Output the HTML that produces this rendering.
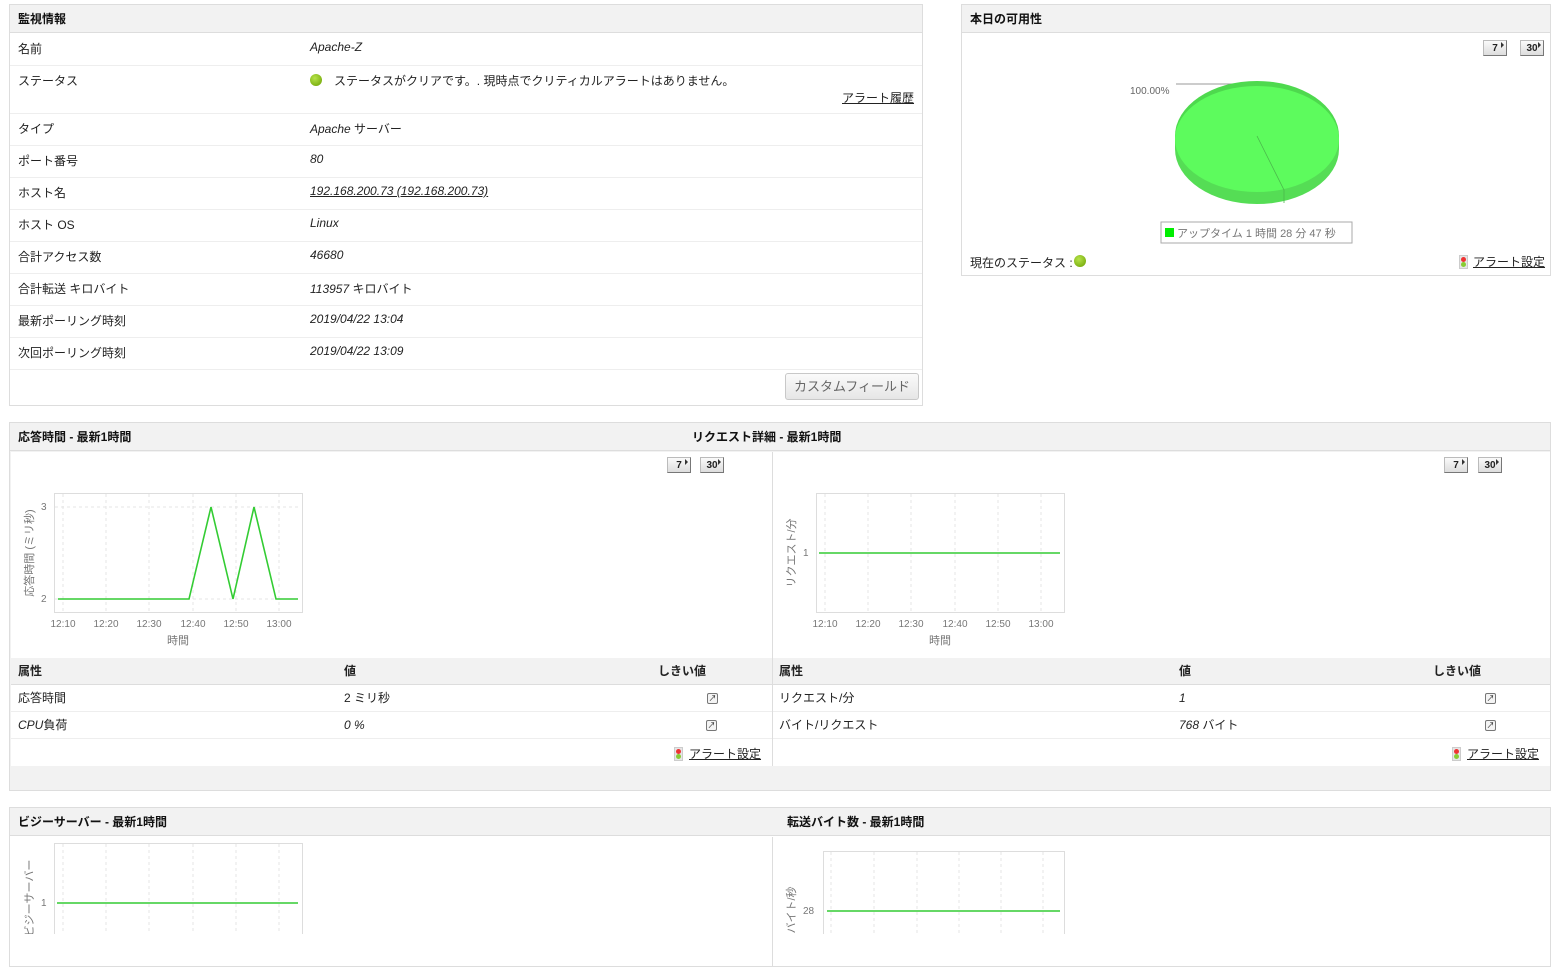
<!DOCTYPE html>
<html><head><meta charset="utf-8"><style>
*{box-sizing:border-box;margin:0;padding:0}
body{width:1557px;height:934px;overflow:hidden;background:#fff;font-family:"Liberation Sans","Noto Sans CJK JP",sans-serif;font-size:12px;color:#222;position:relative}
.a{position:absolute}
.panel{position:absolute;border:1px solid #ddd;background:#fff}
.hd{position:absolute;left:0;right:0;top:0;height:28px;background:#f2f2f2;border-bottom:1px solid #ddd;font-weight:bold;font-size:12px;line-height:28px;padding-left:8px;color:#111}
.row{position:absolute;left:0;right:0;border-bottom:1px solid #eee;font-size:12px}
.row span{position:absolute;top:6px}
.i{font-style:italic}
u{color:#222}
.btn{position:absolute;width:24px;height:16px;background:linear-gradient(#fafafa,#ddd);border:1px solid #bbb;border-bottom-color:#777;border-right-color:#777;font-size:10px;font-weight:bold;text-align:center;line-height:15px}
.btn:after{content:"";position:absolute;right:2px;top:1px;border-left:3px solid #333;border-top:3px solid transparent;border-bottom:3px solid transparent}
.ext{position:absolute;width:11px;height:11px;border:1px solid #777;border-radius:2px;background:#f4f4f4;font-size:8px;line-height:9px;text-align:center}
.tl{position:absolute;width:9px;height:14px;background:#e6e6e6;border:1px solid #ccc}
.tl:before{content:"";position:absolute;left:1px;top:1px;width:5px;height:5px;border-radius:50%;background:#e33}
.tl:after{content:"";position:absolute;left:1px;top:6px;width:5px;height:5px;border-radius:50%;background:#8c3}
.dot{position:absolute;width:12px;height:12px;border-radius:50%;background:radial-gradient(circle at 40% 35%,#b6e34a,#6aa000)}
</style></head><body>

<!-- Panel 1 -->
<div class="panel" style="left:9px;top:4px;width:914px;height:402px">
 <div class="hd">監視情報</div>
 <div class="row" style="top:29px;height:32px"><span style="left:8px">名前</span><span class="i" style="left:300px">Apache-Z</span></div>
 <div class="row" style="top:61px;height:48px"><span style="left:8px">ステータス</span><div class="dot" style="left:300px;top:8px"></div><span style="left:324px">ステータスがクリアです。. 現時点でクリティカルアラートはありません。</span><span style="left:832px;top:23px"><u>アラート履歴</u></span></div>
 <div class="row" style="top:109px;height:32px"><span style="left:8px">タイプ</span><span style="left:300px"><i>Apache</i> サーバー</span></div>
 <div class="row" style="top:141px;height:32px"><span style="left:8px">ポート番号</span><span class="i" style="left:300px">80</span></div>
 <div class="row" style="top:173px;height:32px"><span style="left:8px">ホスト名</span><span class="i" style="left:300px"><u>192.168.200.73 (192.168.200.73)</u></span></div>
 <div class="row" style="top:205px;height:32px"><span style="left:8px">ホスト OS</span><span class="i" style="left:300px">Linux</span></div>
 <div class="row" style="top:237px;height:32px"><span style="left:8px">合計アクセス数</span><span class="i" style="left:300px">46680</span></div>
 <div class="row" style="top:269px;height:32px"><span style="left:8px">合計転送 キロバイト</span><span style="left:300px"><i>113957</i> キロバイト</span></div>
 <div class="row" style="top:301px;height:32px"><span style="left:8px">最新ポーリング時刻</span><span class="i" style="left:300px">2019/04/22 13:04</span></div>
 <div class="row" style="top:333px;height:32px"><span style="left:8px">次回ポーリング時刻</span><span class="i" style="left:300px">2019/04/22 13:09</span></div>
 <div class="a" style="left:775px;top:368px;width:134px;height:27px;border:1px solid #c8c8c8;border-radius:3px;background:linear-gradient(#fafafa,#e6e6e6);color:#666;font-size:13px;text-align:center;line-height:25px">カスタムフィールド</div>
</div>

<!-- Panel 2 -->
<div class="panel" style="left:961px;top:4px;width:590px;height:272px">
 <div class="hd">本日の可用性</div>
 <div class="btn" style="left:521px;top:35px">7</div>
 <div class="btn" style="left:558px;top:35px">30</div>
 <svg class="a" style="left:0;top:0" width="590" height="272">
  <line x1="214" y1="79" x2="270" y2="79" stroke="#999" stroke-width="1"/>
  <text x="168" y="89" font-size="10" fill="#666" font-family="Liberation Sans">100.00%</text>
  <ellipse cx="295" cy="144" rx="82" ry="55" fill="#55dd55"/>
  <rect x="213" y="131" width="164" height="13" fill="#55dd55"/>
  <ellipse cx="295" cy="131" rx="82" ry="55" fill="#4ed94e"/>
  <ellipse cx="295" cy="134" rx="82" ry="53" fill="#5dfb5d"/>
  <polyline points="295,131 322,185 322,198" fill="none" stroke="#4bb84b" stroke-width="0.8"/>
  <rect x="199" y="217" width="191" height="21" fill="#fff" stroke="#aaa"/>
  <rect x="203" y="223" width="9" height="9" fill="#00ee00"/>
  <text x="215" y="232" font-size="11" fill="#777" font-family="Liberation Sans,Noto Sans CJK JP">アップタイム 1 時間 28 分 47 秒</text>
 </svg>
 <span class="a" style="left:8px;top:249px">現在のステータス :</span>
 <div class="dot" style="left:112px;top:250px"></div>
 <div class="tl" style="left:497px;top:250px"></div>
 <span class="a" style="left:511px;top:248px"><u>アラート設定</u></span>
</div>

<!-- Panel 3 -->
<div class="panel" style="left:9px;top:422px;width:1542px;height:369px;background:#f2f2f2">
 <div class="hd">応答時間 - 最新1時間<span class="a" style="left:682px">リクエスト詳細 - 最新1時間</span></div>
 <div class="a" style="left:1px;top:29px;width:761px;height:314px;background:#fff"></div>
 <div class="a" style="left:763px;top:29px;width:777px;height:314px;background:#fff"></div>
 <div class="a" style="left:762px;top:29px;width:1px;height:314px;background:#ddd"></div>
 <div class="btn" style="left:657px;top:34px">7</div>
 <div class="btn" style="left:690px;top:34px">30</div>
 <div class="btn" style="left:1434px;top:34px">7</div>
 <div class="btn" style="left:1468px;top:34px">30</div>
 <div class="a" style="left:1px;top:235px;width:761px;height:27px;background:#f2f2f2;border-bottom:1px solid #ddd;font-weight:bold;line-height:27px"><span class="a" style="left:7px">属性</span><span class="a" style="left:333px">値</span><span class="a" style="left:647px">しきい値</span></div>
 <div class="a" style="left:1px;top:262px;width:761px;height:27px;border-bottom:1px solid #eee;line-height:27px"><span class="a" style="left:7px">応答時間</span><span class="a" style="left:333px">2 ミリ秒</span><div class="ext" style="left:696px;top:8px">↗</div></div>
 <div class="a" style="left:1px;top:289px;width:761px;height:27px;border-bottom:1px solid #eee;line-height:27px"><span class="a" style="left:7px"><i>CPU</i>負荷</span><span class="a i" style="left:333px">0 %</span><div class="ext" style="left:695px;top:8px">↗</div></div>
 <div class="tl" style="left:664px;top:324px"></div><span class="a" style="left:679px;top:322px"><u>アラート設定</u></span>
 <div class="a" style="left:763px;top:235px;width:777px;height:27px;background:#f2f2f2;border-bottom:1px solid #ddd;font-weight:bold;line-height:27px"><span class="a" style="left:6px">属性</span><span class="a" style="left:406px">値</span><span class="a" style="left:660px">しきい値</span></div>
 <div class="a" style="left:763px;top:262px;width:777px;height:27px;border-bottom:1px solid #eee;line-height:27px"><span class="a" style="left:6px">リクエスト/分</span><span class="a i" style="left:406px">1</span><div class="ext" style="left:712px;top:8px">↗</div></div>
 <div class="a" style="left:763px;top:289px;width:777px;height:27px;border-bottom:1px solid #eee;line-height:27px"><span class="a" style="left:6px">バイト/リクエスト</span><span class="a" style="left:406px"><i>768</i> バイト</span><div class="ext" style="left:712px;top:8px">↗</div></div>
 <div class="tl" style="left:1442px;top:324px"></div><span class="a" style="left:1457px;top:322px"><u>アラート設定</u></span>
</div>

<!-- Panel 4 -->
<div class="panel" style="left:9px;top:807px;width:1542px;height:160px">
 <div class="hd">ビジーサーバー - 最新1時間<span class="a" style="left:777px">転送バイト数 - 最新1時間</span></div>
 <div class="a" style="left:762px;top:29px;width:1px;height:130px;background:#ddd"></div>
</div>

<svg class="a" style="left:0;top:0" width="1557" height="934" font-family="Liberation Sans,Noto Sans CJK JP" font-size="10" fill="#777">
 <g stroke="#e4e4e4" stroke-dasharray="3,3">
  <line x1="63" y1="494" x2="63" y2="611"/><line x1="106" y1="494" x2="106" y2="611"/><line x1="149" y1="494" x2="149" y2="611"/><line x1="193" y1="494" x2="193" y2="611"/><line x1="236" y1="494" x2="236" y2="611"/><line x1="279" y1="494" x2="279" y2="611"/>
  <line x1="55" y1="507" x2="301" y2="507"/><line x1="55" y1="599" x2="301" y2="599"/>
  <line x1="825" y1="494" x2="825" y2="611"/><line x1="868" y1="494" x2="868" y2="611"/><line x1="911" y1="494" x2="911" y2="611"/><line x1="955" y1="494" x2="955" y2="611"/><line x1="998" y1="494" x2="998" y2="611"/><line x1="1041" y1="494" x2="1041" y2="611"/>
  <line x1="63" y1="844" x2="63" y2="934"/><line x1="106" y1="844" x2="106" y2="934"/><line x1="149" y1="844" x2="149" y2="934"/><line x1="193" y1="844" x2="193" y2="934"/><line x1="236" y1="844" x2="236" y2="934"/><line x1="279" y1="844" x2="279" y2="934"/>
  <line x1="831" y1="852" x2="831" y2="934"/><line x1="874" y1="852" x2="874" y2="934"/><line x1="917" y1="852" x2="917" y2="934"/><line x1="959" y1="852" x2="959" y2="934"/><line x1="1001" y1="852" x2="1001" y2="934"/><line x1="1043" y1="852" x2="1043" y2="934"/>
 </g>
 <g fill="none" stroke="#ddd">
  <rect x="54.5" y="493.5" width="248" height="119"/><rect x="816.5" y="493.5" width="248" height="119"/>
  <rect x="54.5" y="843.5" width="248" height="100"/><rect x="823.5" y="851.5" width="241" height="100"/>
 </g>
 <g fill="none" stroke="#33cc33" stroke-width="1.6">
  <polyline points="58,599 189,599 211,507 233,599 254,507 276,599 298,599"/>
  <line x1="819" y1="553" x2="1060" y2="553"/>
  <line x1="57" y1="903" x2="298" y2="903"/>
  <line x1="827" y1="911" x2="1060" y2="911"/>
 </g>
 <text x="41" y="510">3</text><text x="41" y="602">2</text>
 <text x="803" y="556">1</text><text x="41" y="906">1</text><text x="803" y="914">28</text>
 <g text-anchor="middle">
  <text x="63" y="627">12:10</text><text x="106" y="627">12:20</text><text x="149" y="627">12:30</text><text x="193" y="627">12:40</text><text x="236" y="627">12:50</text><text x="279" y="627">13:00</text>
  <text x="825" y="627">12:10</text><text x="868" y="627">12:20</text><text x="911" y="627">12:30</text><text x="955" y="627">12:40</text><text x="998" y="627">12:50</text><text x="1041" y="627">13:00</text>
  <text x="178" y="644" font-size="11">時間</text><text x="940" y="644" font-size="11">時間</text>
 </g>
 <text transform="translate(33,553) rotate(-90)" text-anchor="middle" font-size="11">応答時間 (ミリ秒)</text>
 <text transform="translate(795,553) rotate(-90)" text-anchor="middle" font-size="11">リクエスト/分</text>
 <text transform="translate(33,898) rotate(-90)" text-anchor="middle" font-size="11">ビジーサーバー</text>
 <text transform="translate(795,910) rotate(-90)" text-anchor="middle" font-size="11">バイト/秒</text>
</svg>
</body></html>
